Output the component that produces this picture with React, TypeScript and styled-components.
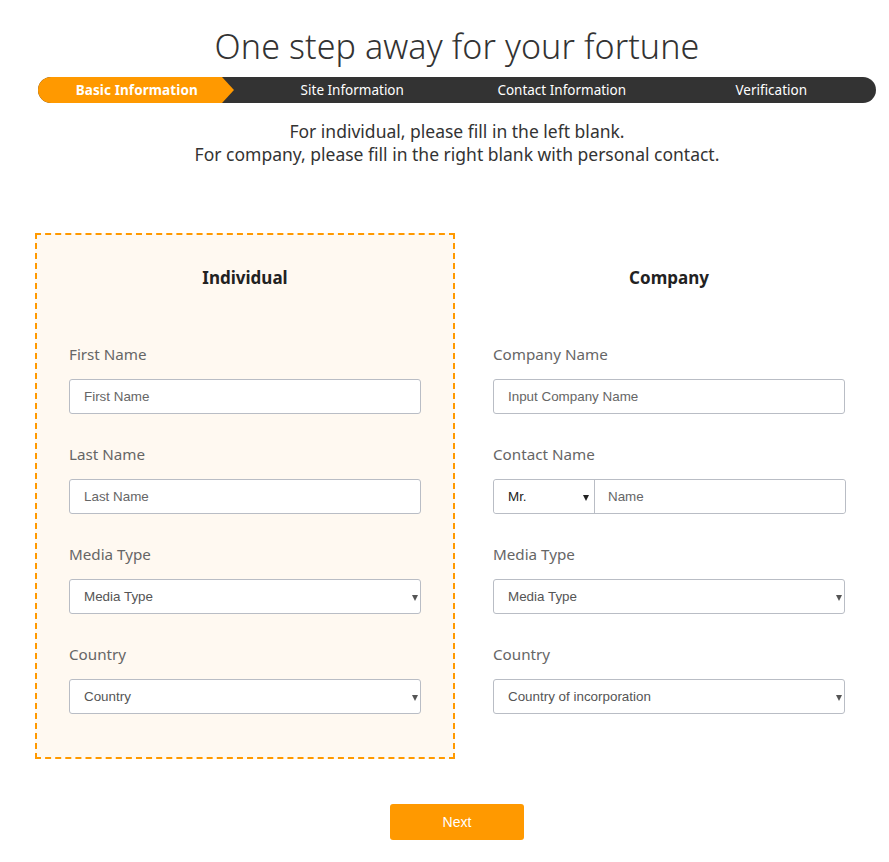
import React from "react";
import styled, { createGlobalStyle } from "styled-components";

const GlobalStyle = createGlobalStyle`
  html, body { margin: 0; padding: 0; background: #fff; }
  body { font-family: "Noto Sans", "Open Sans", sans-serif; color: #333; }
  * { box-sizing: border-box; }
`;

const Page = styled.div`
  width: 844px;
  margin-left: 35px;
  padding-top: 26px;
  padding-bottom: 22px;
  display: flex;
  flex-direction: column;
  align-items: center;
`;

const Title = styled.h1`
  margin: 0;
  font-size: 34px;
  line-height: 40px;
  font-weight: 300;
  color: #333;
  letter-spacing: 0.1px;
`;

const StepBar = styled.div`
  margin-top: 11px;
  width: 838px;
  height: 26px;
  border-radius: 13px;
  overflow: hidden;
  background: #333;
  display: flex;
`;

const Step = styled.div<{ $active?: boolean }>`
  width: 25%;
  flex: none;
  display: flex;
  align-items: center;
  justify-content: center;
  font-size: 13.5px;
  color: #fff;
  font-weight: ${(p) => (p.$active ? 700 : 400)};
  ${(p) =>
    p.$active &&
    `
    background: #ff9900;
    padding-right: 12px;
    letter-spacing: 0.1px;
    clip-path: polygon(0 0, 184px 0, 196px 50%, 184px 100%, 0 100%);
  `}
`;

const Intro = styled.p`
  margin: 17px 0 0;
  text-align: center;
  font-size: 17.5px;
  line-height: 23px;
  color: #333;
`;

const Columns = styled.div`
  margin-top: 67px;
  width: 844px;
  display: grid;
  grid-template-columns: 420px 420px;
  gap: 4px;
`;

const Panel = styled.section<{ $highlight?: boolean }>`
  border: 2px dashed ${(p) => (p.$highlight ? "#ff9900" : "transparent")};
  background: ${(p) => (p.$highlight ? "#fff9f1" : "transparent")};
  padding: 31px 32px 43px;
  display: flex;
  flex-direction: column;
`;

const PanelTitle = styled.h2`
  margin: 0 0 24px;
  text-align: center;
  font-size: 17px;
  line-height: 24px;
  font-weight: 700;
  color: #222;
`;

const Field = styled.div`
  margin-top: 30px;
  display: flex;
  flex-direction: column;
`;

const Label = styled.label`
  font-size: 15.2px;
  line-height: 20px;
  color: #666;
  margin-bottom: 15px;
`;

const controlBase = `
  width: 352px;
  height: 35px;
  border: 1px solid #b9bdc5;
  border-radius: 3px;
  background: #fff;
  font-family: "Liberation Sans", Arial, sans-serif;
  font-size: 13.4px;
  color: #555;
  padding: 0 14px;
  outline: none;
`;

const TextInput = styled.input`
  ${controlBase}
  &::placeholder { color: #666; }
`;

const SelectWrap = styled.div<{ $width?: number }>`
  position: relative;
  width: ${(p) => (p.$width ? `${p.$width}px` : "352px")};
  &::after {
    content: "";
    position: absolute;
    right: 3px;
    top: 50%;
    margin-top: -2px;
    border-left: 3.5px solid transparent;
    border-right: 3.5px solid transparent;
    border-top: 6px solid #555;
    pointer-events: none;
  }
`;

const Select = styled.select`
  ${controlBase}
  width: 100%;
  appearance: none;
  -webkit-appearance: none;
  color: #555;
`;

const Group = styled.div`
  width: 353px;
  height: 35px;
  display: flex;
  border: 1px solid #b9bdc5;
  border-radius: 3px;
  background: #fff;
`;

const GroupSelectWrap = styled(SelectWrap)`
  border-right: 1px solid #b9bdc5;
  &::after { right: 5px; border-top-color: #222; }
`;

const GroupSelect = styled(Select)`
  border: none;
  height: 33px;
  color: #222;
`;

const GroupInput = styled(TextInput)`
  border: none;
  width: auto;
  flex: 1;
  height: 33px;
  padding-left: 13px;
`;

const NextButton = styled.button`
  margin-top: 45px;
  width: 134px;
  height: 36px;
  border: none;
  border-radius: 3px;
  background: #ff9900;
  color: #fff;
  font-family: "Liberation Sans", Arial, sans-serif;
  font-size: 14px;
  cursor: pointer;
`;

const steps = ["Basic Information", "Site Information", "Contact Information", "Verification"];

export default function App() {
  return (
    <>
      <GlobalStyle />
      <Page>
        <Title>One step away for your fortune</Title>
        <StepBar>
          {steps.map((s, i) => (
            <Step key={s} $active={i === 0}>
              {s}
            </Step>
          ))}
        </StepBar>
        <Intro>
          For individual, please fill in the left blank.
          <br />
          For company, please fill in the right blank with personal contact.
        </Intro>
        <Columns>
          <Panel $highlight>
            <PanelTitle>Individual</PanelTitle>
            <Field>
              <Label>First Name</Label>
              <TextInput placeholder="First Name" />
            </Field>
            <Field>
              <Label>Last Name</Label>
              <TextInput placeholder="Last Name" />
            </Field>
            <Field>
              <Label>Media Type</Label>
              <SelectWrap>
                <Select defaultValue="">
                  <option value="">Media Type</option>
                </Select>
              </SelectWrap>
            </Field>
            <Field>
              <Label>Country</Label>
              <SelectWrap>
                <Select defaultValue="">
                  <option value="">Country</option>
                </Select>
              </SelectWrap>
            </Field>
          </Panel>
          <Panel>
            <PanelTitle>Company</PanelTitle>
            <Field>
              <Label>Company Name</Label>
              <TextInput placeholder="Input Company Name" />
            </Field>
            <Field>
              <Label>Contact Name</Label>
              <Group>
                <GroupSelectWrap $width={101}>
                  <GroupSelect defaultValue="mr">
                    <option value="mr">Mr.</option>
                    <option value="ms">Ms.</option>
                  </GroupSelect>
                </GroupSelectWrap>
                <GroupInput placeholder="Name" />
              </Group>
            </Field>
            <Field>
              <Label>Media Type</Label>
              <SelectWrap>
                <Select defaultValue="">
                  <option value="">Media Type</option>
                </Select>
              </SelectWrap>
            </Field>
            <Field>
              <Label>Country</Label>
              <SelectWrap>
                <Select defaultValue="">
                  <option value="">Country of incorporation</option>
                </Select>
              </SelectWrap>
            </Field>
          </Panel>
        </Columns>
        <NextButton>Next</NextButton>
      </Page>
    </>
  );
}
